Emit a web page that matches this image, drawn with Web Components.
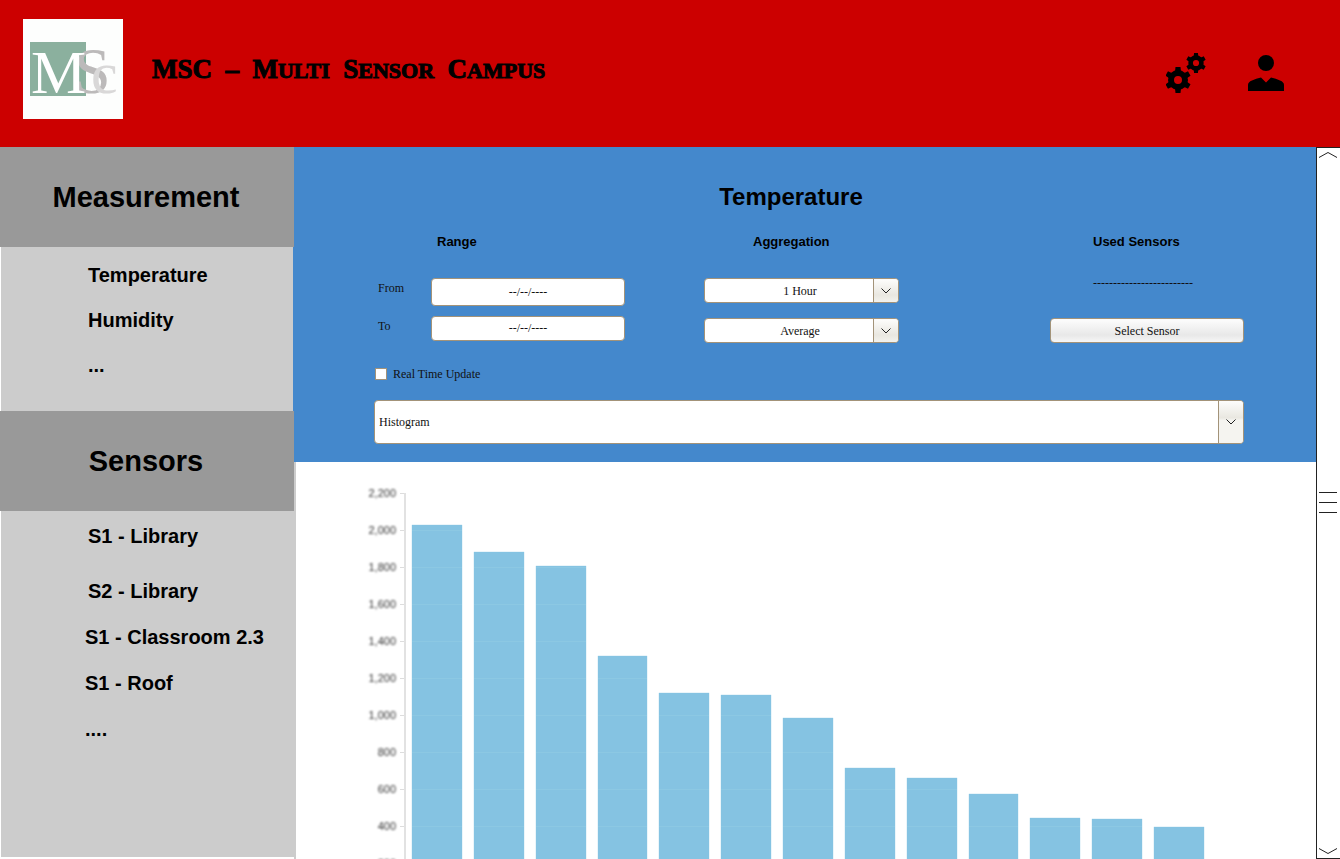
<!DOCTYPE html>
<html lang="en">
<head>
<meta charset="utf-8">
<title>MSC - Multi Sensor Campus</title>
<style>
  html, body { height: 100%; margin: 0; }
  body { background: #fff; color: #000; font-family: "Liberation Sans", Arial, sans-serif; overflow: hidden; }
</style>
</head>
<body>
<msc-app></msc-app>
<script>
const define = (name, html, setup) => {
  const template = document.createElement('template');
  template.innerHTML = html;
  customElements.define(name, class extends HTMLElement {
    constructor() {
      super();
      this.attachShadow({ mode: 'open' }).append(template.content.cloneNode(true));
    }
    connectedCallback() {
      if (setup && !this.ready) { this.ready = true; setup(this, this.shadowRoot); }
    }
  });
};

define('msc-logo', `
<style>
  :host { display: block; width: 100px; height: 100px; background: #fdfefd; }
  svg { display: block; }
  text { font-family: "Liberation Serif", "Times New Roman", serif; }
</style>
<svg width="100" height="100" viewBox="0 0 100 100" role="img" aria-label="MSc logo">
  <rect x="7" y="23" width="56" height="54" fill="#8bb09e"/>
  <text x="51" y="74" font-size="66" fill="#bcbaba">S</text>
  <text x="8" y="74" font-size="62" fill="#fff">M</text>
  <text x="68" y="74" font-size="60" fill="#d9d8d8">c</text>
</svg>`);

define('msc-header', `
<style>
  :host { display: block; background: #c00; }
  header { display: flex; align-items: center; padding: 19px 54px 28px 23px; }
  h1 { margin: 2px 0 0 29px; font: bold 27px/36px "Liberation Serif", "Times New Roman", serif; flex: 1; white-space: pre; -webkit-text-stroke: 1px #000; }
  h1 span { font-size: 22px; text-transform: uppercase; }
  nav { display: flex; gap: 38px; margin-top: 8px; }
  button { border: 0; padding: 0; background: none; color: #000; cursor: pointer; }
  svg { display: block; }
</style>
<header>
  <msc-logo></msc-logo>
  <h1>MSC  –  M<span>ulti</span>  S<span>ensor</span>  C<span>ampus</span></h1>
  <nav>
    <button aria-label="Settings">
      <svg width="42" height="40" viewBox="0 0 42 40">
        <defs>
          <g id="gear">
            <circle r="7" fill="none" stroke="#000" stroke-width="6"/>
            <g id="bar"><path d="M-3-8.500 -2.500-13H2.500L3-8.500ZM-3 8.500-2.500 13H2.500L3 8.500Z"/></g>
            <use href="#bar" transform="rotate(60)"/>
            <use href="#bar" transform="rotate(120)"/>
          </g>
        </defs>
        <use href="#gear" transform="translate(12 27)"/>
        <use href="#gear" transform="translate(30 10) scale(.77)"/>
      </svg>
    </button>
    <button aria-label="User">
      <svg width="40" height="40" viewBox="-2 -2 40 40">
        <circle cx="18" cy="8" r="8"/>
        <path d="M0 36V30Q0 27 4 25.500Q8 23.500 13 22.500L18 27.500 23 22.500Q28 23.500 32 25.500Q36 27 36 30V36Z"/>
      </svg>
    </button>
  </nav>
</header>`);

define('side-section', `
<style>
  :host { display: flex; flex-direction: column; }
  h2 { margin: 0; padding-right: 2px; background: #999; font-size: 29px; line-height: 100px; text-align: center; }
  div { flex: 1; background: #ccc; border-left: 1px solid #fff; border-right: 1px solid var(--edge, #ccc); padding: var(--list-padding, 6px 0 23px); }
</style>
<h2></h2><div><slot></slot></div>`,
(host, root) => { root.querySelector('h2').textContent = host.getAttribute('heading'); });

define('side-link', `
<style>
  :host { display: block; padding-left: 87px; }
  :host([wide]) { padding-left: 84px; }
  :host([lead]) { margin-bottom: 9px; }
  a { display: block; color: #000; text-decoration: none; font-weight: bold; font-size: 20px; line-height: var(--row, 45px); }
</style>
<a href="#"><slot></slot></a>`);

define('select-box', `
<style>
  :host { display: grid; height: 25px; }
  :host([tall]) { height: 44px; }
  select, span { grid-area: 1 / 1; }
  select { appearance: none; box-sizing: border-box; width: 100%; height: 100%; margin: 0; padding: 0 3px 0 0;
    border: 1px solid #a39379; border-radius: 4px; background: #fff; color: #111;
    font: 12px "Liberation Serif", "Times New Roman", serif; text-align: center; text-align-last: center; }
  :host([tall]) select { text-align: left; text-align-last: left; padding: 0 30px 0 4px; }
  span { justify-self: end; width: 24px; margin: 1px; border-left: 1px solid #a39379; border-radius: 0 3px 3px 0;
    background: linear-gradient(#fdfdfc, #e9e7e0 70%, #f3f2ed); display: grid; place-items: center; pointer-events: none; }
  :host([tall]) span { background: linear-gradient(#fdfdfc, #e9e7e0 40%, #f5f4f0 46%); }
</style>
<select><option></option></select>
<span><svg width="10" height="6" viewBox="0 0 10 6" fill="none" stroke="#222"><path d="M.5.5 5 5 9.500.5"/></svg></span>`,
(host, root) => {
  root.querySelector('option').textContent = host.getAttribute('value');
  root.querySelector('select').setAttribute('aria-label', host.getAttribute('label'));
});

define('filter-panel', `
<style>
  :host { display: block; background: #48c; padding: 35px 72px 18px 80px; }
  h2 { margin: 0 0 20px; padding-right: 36px; text-align: center; font-size: 24px; line-height: 30px; }
  .groups { display: grid; grid-template-columns: 251fr 79fr 195fr 151fr 194fr; }
  section:nth-child(2) { grid-column: 3; }
  section:nth-child(3) { grid-column: 5; }
  h3 { margin: 0 0 26px; font-size: 13px; line-height: 20px; }
  .range h3 { padding-left: 63px; }
  .aggregation h3 { padding-left: 49px; }
  .sensors h3, .sensors p { padding-left: 43px; }
  label, p, input, button { font: 12px/20px "Liberation Serif", "Times New Roman", serif; color: #111; }
  .range div { display: grid; grid-template-columns: 57px 1fr; }
  .range div + div { margin-top: 10px; }
  .range label { padding-left: 4px; }
  input[type=text], button { box-sizing: border-box; width: 100%; height: 25px; margin: 0; padding: 0;
    border: 1px solid #a39379; border-radius: 4px; background: #fff; text-align: center; }
  #from { height: 28px; }
  input::placeholder { color: #111; opacity: 1; }
  .aggregation select-box + select-box { margin-top: 15px; }
  p { height: 25px; margin: 0 0 15px; line-height: 10px; white-space: nowrap; }
  button { display: block; background: linear-gradient(#fdfdfd, #e8e8e8 70%, #f6f6f6); }
  .live { display: flex; align-items: center; gap: 6px; margin: 21px 0 16px 1px; height: 20px; }
  input[type=checkbox] { appearance: none; width: 12px; height: 12px; margin: 0; border: 1px solid #a39379; background: #fff; }
  input[type=checkbox]:checked { background: #333; }
</style>
<h2>Temperature</h2>
<div class="groups">
  <section class="range">
    <h3>Range</h3>
    <div><label for="from">From</label><input id="from" type="text" placeholder="--/--/----"></div>
    <div><label for="to">To</label><input id="to" type="text" placeholder="--/--/----"></div>
  </section>
  <section class="aggregation">
    <h3>Aggregation</h3>
    <select-box value="1 Hour" label="Interval"></select-box>
    <select-box value="Average" label="Function"></select-box>
  </section>
  <section class="sensors">
    <h3>Used Sensors</h3>
    <p>-------------------------</p>
    <button>Select Sensor</button>
  </section>
</div>
<div class="live"><input id="live" type="checkbox"><label for="live">Real Time Update</label></div>
<select-box tall value="Histogram" label="Chart type"></select-box>`);

define('bar-chart', `
<style>
  :host { display: grid; grid-template-columns: 100px 10px 1fr; border-left: 2px solid #ccc; padding: 13px 112px 0 0; }
  ol { list-style: none; margin: 0; padding: 0; text-align: right; font-size: 11px; line-height: 37px; color: #333; filter: blur(1px); }
  li { height: 37px; }
  .axis { margin-top: 18px; height: 407px; box-sizing: border-box; border-right: 2px solid #e2e2e2; margin-left: 4px;
    background: repeating-linear-gradient(#ddd 0 1px, transparent 1px 37px); }
  .bars { margin: 18px 0 0 6px; height: 407px; display: flex; align-items: flex-end; gap: 12px; }
  i { flex: 1; height: calc(var(--value) * 37px / 200); box-shadow: 0 0 1px #85c3e2;
    background: repeating-linear-gradient(to top, #85c3e2 0 36px, #8cc8e3 36px 37px); }
</style>
<ol></ol><div class="axis"></div><div class="bars"></div>`,
(host, root) => {
  for (let v = 2200; v >= 200; v -= 200) {
    const li = document.createElement('li');
    li.textContent = v.toLocaleString('en-US');
    root.querySelector('ol').append(li);
  }
  for (const v of host.getAttribute('values').split(' ')) {
    const bar = document.createElement('i');
    bar.style.setProperty('--value', v);
    root.querySelector('.bars').append(bar);
  }
});

define('scroll-rail', `
<style>
  :host { display: flex; flex-direction: column; justify-content: space-between; align-items: center; box-sizing: border-box;
    background: #fff; border: solid #222; border-width: 1px 0 1px 1px; padding: 4px 2px 4px 1px; }
  svg { display: block; fill: none; stroke: #222; }
</style>
<svg width="18" height="6" viewBox="0 0 18 6"><path d="M0 5.500 9 .5 18 5.500"/></svg>
<svg width="18" height="22" viewBox="0 0 18 22"><path d="M0 .5H18M0 10.500H18M0 20.500H18"/></svg>
<svg width="18" height="6" viewBox="0 0 18 6"><path d="M0 .5 9 5.500 18 .5"/></svg>`);

define('msc-app', `
<style>
  :host { display: flex; flex-direction: column; height: 100vh; }
  .body { flex: 1; min-height: 0; display: grid; grid-template-columns: 294px 1fr 24px; grid-template-rows: 100%; }
  aside { display: flex; flex-direction: column; padding-bottom: 2px; }
  .measures { --edge: #48c; }
  .sensors { flex: 1; --list-padding: 2px 0 0; --row: 46px; }
  main { overflow: hidden; }
</style>
<msc-header></msc-header>
<div class="body">
  <aside>
    <side-section class="measures" heading="Measurement">
      <side-link>Temperature</side-link>
      <side-link>Humidity</side-link>
      <side-link>...</side-link>
    </side-section>
    <side-section class="sensors" heading="Sensors">
      <side-link lead>S1 - Library</side-link>
      <side-link>S2 - Library</side-link>
      <side-link wide>S1 - Classroom 2.3</side-link>
      <side-link wide>S1 - Roof</side-link>
      <side-link wide>....</side-link>
    </side-section>
  </aside>
  <main>
    <filter-panel></filter-panel>
    <bar-chart values="2027 1883 1808 1320 1120 1110 982 711 661 573 441 438 395"></bar-chart>
  </main>
  <scroll-rail></scroll-rail>
</div>`);
</script>
</body>
</html>
